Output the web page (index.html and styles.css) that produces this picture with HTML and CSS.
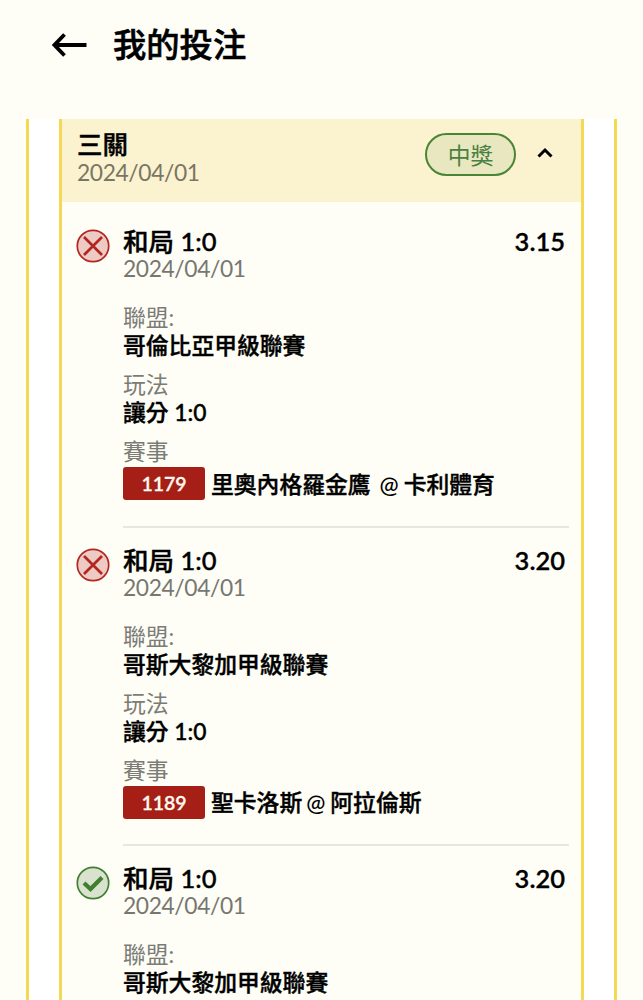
FILE: index.html
```html
<!DOCTYPE html>
<html lang="zh-Hant">

<head>
    <meta charset="UTF-8">
    <title>我的投注</title>
    <link rel="stylesheet" href="styles.css">
</head>

<body>
    <header class="top-bar">
        <svg class="back" viewBox="0 0 36 26">
            <path d="M12.500 2.500L2.500 13l10 10.500M2.500 13H34.500" />
        </svg>
        <h1 class="page-title">我的投注</h1>
    </header>
    <main class="outer">
        <section class="card">
            <div class="card-head">
                <div class="head-text">
                    <div class="title">三關</div>
                    <div class="date">2024/04/01</div>
                </div>
                <span class="tag">中獎</span>
                <svg class="arrow" viewBox="0 0 16 12">
                    <path d="M1.500 9.500L8 3l6.500 6.500" />
                </svg>
            </div>
            <ul class="bet-ul">
                <li class="bet">
                    <svg class="icon lose" viewBox="0 0 34 34">
                        <circle cx="17" cy="17" r="15.700" />
                        <path d="M8 8l18 18M26 8L8 26" />
                    </svg>
                    <div class="bet-body">
                        <div class="bet-top">
                            <span class="title">和局 1:0</span>
                            <span class="odds">3.15</span>
                        </div>
                        <div class="date">2024/04/01</div>
                        <dl class="info">
                            <dt>聯盟:</dt>
                            <dd>哥倫比亞甲級聯賽</dd>
                            <dt>玩法</dt>
                            <dd>讓分 1:0</dd>
                            <dt>賽事</dt>
                            <dd class="match"><span class="num">1179</span><span>里奧內格羅金鷹</span><span class="at wide">@</span><span>卡利體育</span></dd>
                        </dl>
                    </div>
                </li>
                <li class="bet">
                    <svg class="icon lose" viewBox="0 0 34 34">
                        <circle cx="17" cy="17" r="15.700" />
                        <path d="M8 8l18 18M26 8L8 26" />
                    </svg>
                    <div class="bet-body">
                        <div class="bet-top">
                            <span class="title">和局 1:0</span>
                            <span class="odds">3.20</span>
                        </div>
                        <div class="date">2024/04/01</div>
                        <dl class="info">
                            <dt>聯盟:</dt>
                            <dd>哥斯大黎加甲級聯賽</dd>
                            <dt>玩法</dt>
                            <dd>讓分 1:0</dd>
                            <dt>賽事</dt>
                            <dd class="match"><span class="num">1189</span><span>聖卡洛斯</span><span class="at">@</span><span>阿拉倫斯</span></dd>
                        </dl>
                    </div>
                </li>
                <li class="bet">
                    <svg class="icon win" viewBox="0 0 34 34">
                        <circle cx="17" cy="17" r="15.700" />
                        <path d="M8 17l6.500 6L26 11.500" />
                    </svg>
                    <div class="bet-body last">
                        <div class="bet-top">
                            <span class="title">和局 1:0</span>
                            <span class="odds">3.20</span>
                        </div>
                        <div class="date">2024/04/01</div>
                        <dl class="info">
                            <dt>聯盟:</dt>
                            <dd>哥斯大黎加甲級聯賽</dd>
                        </dl>
                    </div>
                </li>
            </ul>
        </section>
    </main>
</body>

</html>
```

FILE: styles.css
```css
* {
    box-sizing: border-box;
}

body {
    height: 1000px;
    margin: 0;
    overflow: hidden;
    display: flex;
    flex-direction: column;
    background: #fefef6;
    color: #000;
    font-family: Lato, "Noto Sans CJK TC", sans-serif;
    font-size: 22.8px;
}

.top-bar {
    flex: none;
    height: 119px;
    display: flex;
    align-items: flex-start;
    padding: 20px 0 0 52px;
}

.back {
    width: 36px;
    height: 26px;
    margin-top: 12px;
}

.back path {
    fill: none;
    stroke: #000;
    stroke-width: 3.8;
}

.page-title {
    margin: 0 0 0 25px;
    font-size: 33.3px;
    font-weight: 500;
    line-height: 48px;
    -webkit-text-stroke: .6px #000;
}

.outer {
    flex: 1;
    min-height: 0;
    display: flex;
    margin: 0 26px;
    padding: 0 30px;
    background: #fff;
    border: solid #f5d955;
    border-width: 0 3px;
}

.card {
    flex: 1;
    background: #fefef6;
    border: solid #f5d955;
    border-width: 0 3px;
}

.card-head {
    height: 83px;
    display: flex;
    align-items: flex-start;
    padding: 13px 28px 0 15px;
    background: #fbf2cf;
}

.head-text {
    flex: 1;
}

.head-text .title {
    margin-top: -1px;
}

.head-text .date {
    margin-top: 1px;
}

.title {
    font-size: 25.5px;
    font-weight: 500;
    line-height: 27px;
    white-space: nowrap;
    -webkit-text-stroke: .4px #000;
}

.date {
    color: #777771;
    letter-spacing: -.38px;
    line-height: 27px;
}

.card-head .date {
    color: #7a7664;
}

.tag {
    width: 91px;
    height: 43px;
    margin-top: 1px;
    border: 2px solid #4a8436;
    border-radius: 22px;
    background: #e9e7c0;
    color: #4a8040;
    line-height: 41px;
    text-align: center;
}

.arrow {
    width: 16px;
    height: 12px;
    margin: 15px 0 0 21px;
}

.arrow path {
    fill: none;
    stroke: #000;
    stroke-width: 3;
}

.bet-ul {
    margin: 0;
    padding: 0 12px 0 15px;
    list-style: none;
}

.bet {
    display: flex;
    align-items: flex-start;
    padding-top: 27px;
}

.bet + .bet {
    padding-top: 20px;
}

.icon {
    flex: none;
    width: 34px;
    height: 34px;
    margin: 0 13px 0 -1px;
}

.icon circle {
    stroke-width: 1.7;
}

.icon path {
    fill: none;
}

.lose circle {
    fill: #eecac4;
    stroke: #b32620;
}

.lose path {
    stroke: #b32620;
    stroke-width: 2.7;
}

.win circle {
    fill: #d8e2cd;
    stroke: #407f32;
}

.win path {
    stroke: #407f32;
    stroke-width: 4.2;
}

.bet-body {
    flex: 1;
    height: 299.600px;
    margin-top: -1px;
    border-bottom: 2px solid #e7e7e1;
}

.bet-body.last {
    height: auto;
    border-bottom: 0;
}

.bet-top {
    display: flex;
    justify-content: space-between;
    padding-right: 4px;
}

.odds {
    font-size: 25.5px;
    font-weight: 600;
    line-height: 27px;
    -webkit-text-stroke: .3px #000;
}

.info {
    margin: 21px 0 0;
}

.info dt {
    color: #7c7c76;
    line-height: 28px;
}

.info dd {
    margin: 0 0 11px;
    font-weight: 500;
    line-height: 28px;
    white-space: nowrap;
    -webkit-text-stroke: .4px #000;
}

.info .match {
    display: flex;
    align-items: center;
    margin: 2px 0 0;
}

.last .info dd {
    margin: 0;
}

.num {
    width: 82px;
    height: 33px;
    margin-right: 6px;
    border-radius: 3px;
    background: #a61f16;
    color: #fefaf0;
    font-size: 19.5px;
    font-weight: 600;
    line-height: 33px;
    text-align: center;
    -webkit-text-stroke: .3px #fefaf0;
}

.at {
    margin: 0 5px 0 4px;
    -webkit-text-stroke: 0;
}

.at.wide {
    margin-left: 9px;
}
```
